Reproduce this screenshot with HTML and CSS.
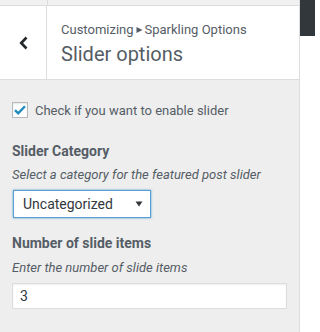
FILE: index.html
```html
<!DOCTYPE html>
<html>
<head>
<meta charset="utf-8">
<link rel="stylesheet" href="styles.css">
</head>
<body>
<div class="page">
  <div class="sidebar">
    <div class="prev-strip"><div class="prev-back"></div></div>
    <div class="section-head">
      <div class="back">
        <svg width="10" height="14" viewBox="0 0 10 14"><polyline points="7.5,1.5 2.2,7 7.5,12.5" fill="none" stroke="#23282d" stroke-width="2.6"/></svg>
      </div>
      <div class="head-title">
        <div class="action">Customizing<svg class="crumb" width="7" height="8" viewBox="0 0 7 8"><polygon points="0.5,1 6.5,4 0.5,7" fill="#555d66"/></svg>Sparkling Options</div>
        <h3 class="section-title">Slider options</h3>
      </div>
    </div>
    <div class="controls">
      <label class="check-row">
        <span class="checkbox">
          <svg width="14" height="14" viewBox="0 0 14 14"><polyline points="2,7.2 5.2,10.4 12,3.2" fill="none" stroke="#1e8cbe" stroke-width="2.4"/></svg>
        </span>
        <span class="check-label">Check if you want to enable slider</span>
      </label>
      <div class="control first">
        <div class="control-title">Slider Category</div>
        <div class="desc">Select a category for the featured post slider</div>
        <div class="select-wrap">
          <div class="select">Uncategorized</div>
          <svg class="arrow" width="8" height="6" viewBox="0 0 8 6"><polygon points="0.5,0.5 7.5,0.5 4,5.5" fill="#32373c"/></svg>
        </div>
      </div>
      <div class="control second">
        <div class="control-title">Number of slide items</div>
        <div class="desc">Enter the number of slide items</div>
        <div class="input">3</div>
      </div>
    </div>
  </div>
  <div class="preview">
    <div class="preview-bar"></div>
  </div>
</div>
</body>
</html>
```

FILE: styles.css
```css
html, body {
  margin: 0;
  padding: 0;
}
body {
  font-family: Roboto, "Liberation Sans", sans-serif;
  color: #555d66;
  background: #fff;
}
.page {
  display: flex;
  width: 315px;
  height: 332px;
  overflow: hidden;
}
.sidebar {
  width: 299px;
  flex: none;
  background: #eee;
  border-right: 1px solid #ddd;
  height: 332px;
}
.prev-strip {
  height: 5px;
  background: #f1f1f1;
  border-bottom: 1px solid #ddd;
  display: flex;
}
.prev-back {
  width: 47px;
  border-right: 1px solid #ddd;
}
.section-head {
  display: flex;
  background: #fff;
  border-bottom: 1px solid #ddd;
  height: 73px;
}
.back {
  width: 47px;
  border-right: 1px solid #ddd;
  display: flex;
  align-items: center;
  justify-content: center;
  padding-top: 1px;
  box-sizing: border-box;
}
.back svg {
  margin-left: 1px;
}
.head-title {
  padding: 11px 10px 11px 14px;
}
.action {
  font-size: 13px;
  line-height: 24px;
  color: #555d66;
  display: flex;
  align-items: center;
  height: 24px;
  padding-top: 1px;
  box-sizing: border-box;
}
.crumb {
  margin: 1px 2px 0 2px;
}
.section-title {
  margin: 0;
  font-size: 20px;
  font-weight: 400;
  line-height: 27px;
  color: #555d66;
}
.controls {
  padding: 21px 12px 0 12px;
}
.check-row {
  display: flex;
  align-items: flex-start;
  height: 20px;
}
.checkbox {
  width: 16px;
  height: 16px;
  box-sizing: border-box;
  border: 1px solid #b4b9be;
  background: #fff;
  box-shadow: inset 0 1px 2px rgba(0,0,0,.1);
  margin-top: 1px;
  display: flex;
  align-items: center;
  justify-content: center;
}
.check-label {
  font-size: 13px;
  line-height: 20px;
  margin-left: 7px;
  color: #555d66;
}
.control.first {
  margin-top: 20px;
}
.control.second {
  margin-top: 15px;
}
.control-title {
  font-size: 14px;
  font-weight: 700;
  line-height: 20px;
  color: #555d66;
}
.desc {
  font-size: 13px;
  font-style: italic;
  line-height: 18px;
  margin-top: 5px;
  color: #555d66;
}
.second .desc {
  margin-top: 6px;
}
.select-wrap {
  position: relative;
  margin-top: 6px;
  margin-left: 1px;
  width: 138px;
}
.select {
  height: 28px;
  box-sizing: border-box;
  border: 1px solid #5b9dd9;
  box-shadow: 0 0 2px rgba(30,140,190,.8);
  background: #fff;
  font-size: 14px;
  line-height: 26px;
  padding-left: 9px;
  color: #32373c;
}
.arrow {
  position: absolute;
  right: 8px;
  top: 11px;
}
.input {
  margin-top: 6px;
  width: 275px;
  height: 26px;
  box-sizing: border-box;
  border: 1px solid #ddd;
  box-shadow: inset 0 1px 2px rgba(0,0,0,.07);
  background: #fff;
  font-size: 14px;
  line-height: 24px;
  padding-left: 7px;
  color: #32373c;
}
.preview {
  flex: 1;
  background: #fff;
}
.preview-bar {
  height: 36px;
  background: #32373c;
}
```
